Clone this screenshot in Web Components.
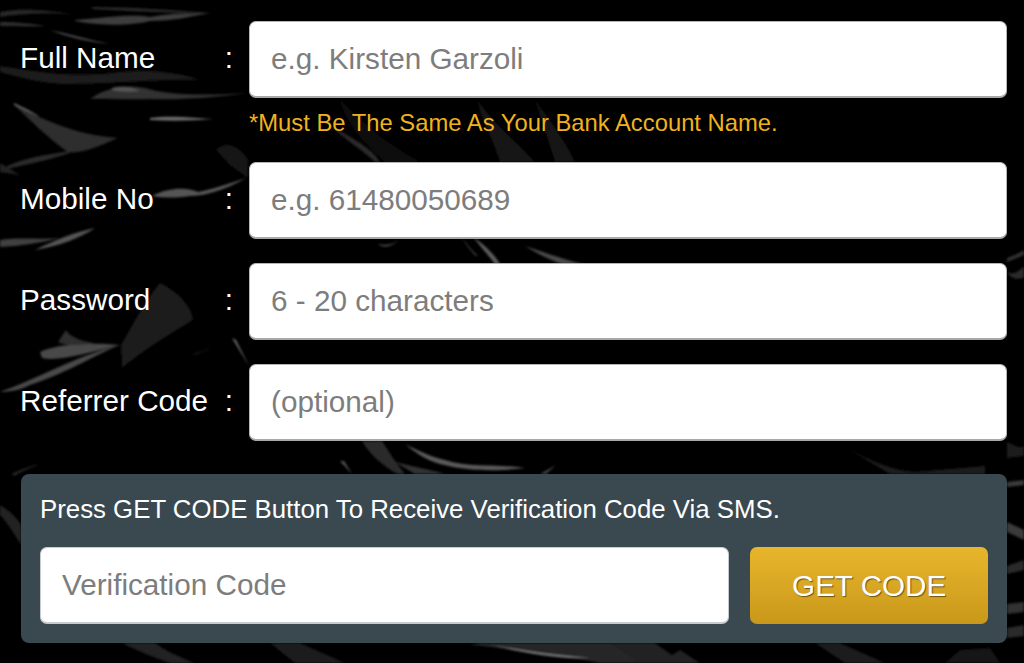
<!DOCTYPE html>
<html lang="en">
<head>
<meta charset="utf-8">
<title>Register</title>
<style>
  html, body { margin: 0; height: 100%; background: #000; overflow: hidden; }
  body { font-family: "Liberation Sans", Arial, sans-serif; }
</style>
</head>
<body>
<reg-page>
  <reg-row label="Full Name" placeholder="e.g. Kirsten Garzoli" note="*Must Be The Same As Your Bank Account Name."></reg-row>
  <reg-row label="Mobile No" placeholder="e.g. 61480050689"></reg-row>
  <reg-row label="Password" placeholder="6 - 20 characters"></reg-row>
  <reg-row label="Referrer Code" placeholder="(optional)"></reg-row>
  <reg-verify placeholder="Verification Code" button="GET CODE">Press GET CODE Button To Receive Verification Code Via SMS.</reg-verify>
</reg-page>

<script>
const pageTpl = document.createElement("template");
pageTpl.innerHTML = `
<style>
  :host {
    display: block;
    position: relative;
    width: 1024px;
    height: 663px;
    box-sizing: border-box;
    padding: 21px 17px 0 20px;
    background: #000;
    overflow: hidden;
    --field-font: 29.7px;
  }
  svg { position: absolute; left: 0; top: 0; width: 1024px; height: 663px; }
  .content { position: relative; display: flex; flex-direction: column; }
</style>
<svg viewBox="0 0 1024 663" aria-hidden="true">
  <defs><filter id="b" x="-10%" y="-30%" width="120%" height="160%"><feGaussianBlur stdDeviation="1.2"/></filter></defs>
  <g filter="url(#b)">
    <!-- top left -->
    <path d="M0 12 C30 6 70 14 72 15 C50 12 20 14 0 17Z" fill="#262626"/>
    <path d="M92 7 C130 7 170 10 212 13 C170 13 130 11 92 9Z" fill="#2c2c2c"/>
    <path d="M75 20 C110 17 135 14 150 17 C175 12 195 14 210 13 C185 18 170 21 150 21 C130 26 100 26 75 21Z" fill="#3c3c3c"/>
    <path d="M0 22 C15 22 35 24 45 26 C30 27 10 26 0 26Z" fill="#2e2e2e"/>
    <path d="M50 30 C70 34 90 40 110 44 C85 42 65 36 50 30Z" fill="#444"/>
    <path d="M0 66 C40 72 70 78 120 72 C160 68 190 76 200 80 C150 79 120 84 70 84 C40 84 15 76 0 72Z" fill="#1d1d1d"/>
    <path d="M90 99 C105 88 125 84 145 88 C165 95 205 96 248 93 C210 98 180 100 150 99 C125 100 105 98 90 99Z" fill="#333"/>
    <path d="M112 88 C122 85 135 88 140 91 C130 92 120 92 112 90Z" fill="#555"/>
    <path d="M14 103 C20 106 30 110 40 117 C30 113 20 108 14 105Z" fill="#666"/>
    <path d="M14 105 C40 118 75 135 118 138 C95 148 80 154 68 152 C50 140 30 120 14 105Z" fill="#2d2d2d"/>
    <path d="M150 118 C170 115 195 118 213 119 C190 121 170 121 150 120Z" fill="#6a6a6a"/>
    <path d="M70 151 C45 155 20 158 0 170 C20 166 50 160 70 153Z" fill="#2c2c2c"/>
    <path d="M0 163 L20 175 L0 172Z" fill="#222"/>
    <!-- left middle -->
    <path d="M152 196 C170 186 190 188 198 192 C210 190 228 184 246 178 C225 190 205 196 190 196 C175 198 165 198 152 196Z" fill="#555"/>
    <path d="M35 250 C55 240 75 232 95 228 C80 238 60 246 35 250Z" fill="#555"/>
    <path d="M0 240 C20 237 40 240 60 238 C40 243 20 246 0 247Z" fill="#3f3f3f"/>
    <!-- smoke between name and mobile -->
    <path d="M216 150 C225 140 240 146 248 160 L248 178 L230 165Z" fill="#161616"/>
    <path d="M340 100 C360 120 380 140 420 162 L385 162 C360 140 345 120 340 100Z" fill="#101010"/>
    <path d="M478 100 C490 120 515 140 535 162 L500 162 C490 130 480 120 478 100Z" fill="#141414"/>
    <path d="M535 100 C550 120 565 140 575 162 L555 162Z" fill="#121212"/>
    <path d="M330 125 C345 135 370 145 380 162 L375 162 C360 148 345 140 330 125Z" fill="#2a2a2a"/>
    <!-- password blob -->
    <path d="M160 283 C175 290 192 305 193 320 C180 328 150 345 122 368 L121 345 C130 330 145 300 160 283Z" fill="#1b1b1b"/>
    <path d="M0 392 C40 378 70 358 120 345 C100 352 70 372 30 385 C20 390 10 392 0 392Z" fill="#4a4a4a"/>
    <path d="M40 352 C55 344 90 342 120 345 C90 352 60 362 42 358Z" fill="#484848"/>
    <path d="M58 342 L66 330 C70 338 85 342 95 343 C80 346 65 346 58 342Z" fill="#2e2e2e"/>
    <path d="M192 355 C200 352 206 350 212 348 L196 354Z" fill="#666"/>
    <path d="M232 338 L249 366 L236 340Z" fill="#666"/>
    <!-- between rows -->
    <path d="M462 238 C468 245 472 250 478 256 L475 256 C470 250 465 244 462 238Z" fill="#333"/>
    <path d="M474 238 C485 245 495 255 500 264 L495 264 C488 255 480 246 474 238Z" fill="#5c5c5c"/>
    <path d="M525 246 C550 254 570 262 585 264 L562 264 C545 258 535 252 525 246Z" fill="#4a4a4a"/>
    <path d="M378 244 C390 246 395 243 398 240 C392 248 382 248 378 244Z" fill="#444"/>
    <path d="M1007 258 C1012 256 1018 254 1024 250 L1024 255 L1007 262Z" fill="#333"/>
    <path d="M1007 272 C1014 276 1020 270 1024 266 L1024 278 C1016 280 1010 278 1007 272Z" fill="#2a2a2a"/>
    <!-- under referrer -->
    <path d="M362 441 C370 455 385 468 398 474 L405 474 C395 462 388 450 382 441Z" fill="#2c2c2c"/>
    <path d="M405 444 C420 452 435 458 445 460 C470 468 500 464 525 468 C500 471 470 472 440 464 C425 460 415 452 405 444Z" fill="#5a5a5a"/>
    <path d="M395 462 C420 468 440 472 445 474 L415 474Z" fill="#333"/>
    <path d="M340 461 L352 474 L344 461Z" fill="#555"/>
    <path d="M540 474 L556 465 L546 474Z" fill="#444"/>
    <path d="M850 450 C870 460 890 470 915 472 L985 466 L985 474 L890 474Z" fill="#1f1f1f"/>
    <path d="M1007 442 C1015 445 1020 450 1024 445 L1024 456 L1007 458Z" fill="#1c1c1c"/>
    <!-- right of panel -->
    <path d="M1007 482 L1024 480 L1024 485 L1007 487Z" fill="#3a3a3a"/>
    <path d="M1007 522 L1024 530 L1024 540 L1007 532Z" fill="#3a3a3a"/>
    <path d="M1007 566 L1024 560 L1024 570 L1007 574Z" fill="#2c2c2c"/>
    <path d="M1007 604 L1024 602 L1024 612 L1007 614Z" fill="#333"/>
    <path d="M1007 628 L1024 625 L1024 636 L1007 638Z" fill="#2a2a2a"/>
    <!-- left of panel -->
    <path d="M0 505 C8 510 15 515 21 525 L21 545 C12 530 5 520 0 515Z" fill="#222"/>
    <path d="M12 474 C20 470 30 466 40 464 C30 468 20 472 14 476Z" fill="#2a2a2a"/>
    <!-- under panel -->
    <path d="M122 643 C135 650 155 658 170 663 L195 663 C175 655 165 650 155 643Z" fill="#222"/>
    <path d="M270 643 L295 663 L345 663 L300 643Z" fill="#1c1c1c"/>
    <path d="M470 645 C510 648 560 655 600 663 L640 663 L620 643 L480 643Z" fill="#262626"/>
    <path d="M490 645 C520 650 550 655 590 658 C560 660 520 652 490 645Z" fill="#777"/>
    <path d="M610 643 L640 663 L700 663 L680 650 L672 655 L655 643Z" fill="#222"/>
    <path d="M815 643 L845 663 L885 663 L840 643Z" fill="#1e1e1e"/>
    <path d="M960 650 L945 663 L1000 663 L990 648Z" fill="#151515"/>
  </g>
</svg>
<div class="content"><slot></slot></div>
`;

const rowTpl = document.createElement("template");
rowTpl.innerHTML = `
<style>
  :host {
    display: grid;
    grid-template-columns: 229px 758px;
    margin-bottom: 24px;
  }
  .label {
    display: flex;
    align-items: center;
    justify-content: space-between;
    height: 77px;
    padding: 0 16px 3px 0;
    box-sizing: border-box;
    color: #fff;
    font-size: var(--field-font);
    white-space: nowrap;
  }
  input {
    display: block;
    width: 100%;
    height: 77px;
    box-sizing: border-box;
    padding: 0 21px;
    border: 1px solid #b5b5b5;
    border-bottom: 2px solid #a8a8a8;
    border-radius: 7px;
    outline: 0;
    background: #fff;
    font: var(--field-font) "Liberation Sans", Arial, sans-serif;
  }
  input::placeholder { color: #7d7d7d; opacity: 1; }
  .note {
    grid-column: 2;
    margin-top: 12px;
    margin-bottom: 2px;
    color: #eeb31e;
    font-size: 23.8px;
    line-height: 26px;
  }
  .note:empty { display: none; }
</style>
<div class="label"><span></span><span>:</span></div>
<input type="text">
<div class="note"></div>
`;

class RegRow extends HTMLElement {
  constructor() {
    super();
    this.attachShadow({ mode: "open" });
    this.shadowRoot.appendChild(rowTpl.content.cloneNode(true));
  }

  connectedCallback() {
    this.shadowRoot.querySelector(".label span").textContent = this.getAttribute("label");
    this.shadowRoot.querySelector("input").placeholder = this.getAttribute("placeholder");
    this.shadowRoot.querySelector(".note").textContent = this.getAttribute("note") || "";
  }
}

const verifyTpl = document.createElement("template");
verifyTpl.innerHTML = `
<style>
  :host {
    display: block;
    width: 986px;
    height: 169px;
    margin: 9px 0 0 1px;
    box-sizing: border-box;
    padding: 20px 19px 0 19px;
    border-radius: 8px;
    background: #3a4850;
    color: #fff;
  }
  .text { font-size: 25.8px; line-height: 30px; height: 53px; white-space: nowrap; }
  .controls { display: flex; gap: 21px; }
  input {
    width: 690px;
    height: 77px;
    box-sizing: border-box;
    padding: 0 21px;
    border: 1px solid #c5cbce;
    border-bottom-width: 2px;
    border-radius: 7px;
    outline: 0;
    background: #fff;
    font: var(--field-font) "Liberation Sans", Arial, sans-serif;
  }
  input::placeholder { color: #7d7d7d; opacity: 1; }
  button {
    width: 238px;
    height: 77px;
    padding: 0;
    border: 0;
    border-radius: 7px;
    background: linear-gradient(#e8b62c, #c9981a);
    color: #fff;
    font: 29.6px "Liberation Sans", Arial, sans-serif;
    text-shadow: 1px 1px 1px #6e5310;
  }
</style>
<div class="text"><slot></slot></div>
<div class="controls">
  <input type="text">
  <button type="button"></button>
</div>
`;

class RegVerify extends HTMLElement {
  constructor() {
    super();
    this.attachShadow({ mode: "open" });
    this.shadowRoot.appendChild(verifyTpl.content.cloneNode(true));
  }

  connectedCallback() {
    this.shadowRoot.querySelector("input").placeholder = this.getAttribute("placeholder");
    this.shadowRoot.querySelector("button").textContent = this.getAttribute("button");
  }
}

class RegPage extends HTMLElement {
  constructor() {
    super();
    this.attachShadow({ mode: "open" });
    this.shadowRoot.appendChild(pageTpl.content.cloneNode(true));
  }
}

customElements.define("reg-row", RegRow);
customElements.define("reg-verify", RegVerify);
customElements.define("reg-page", RegPage);
</script>
</body>
</html>
